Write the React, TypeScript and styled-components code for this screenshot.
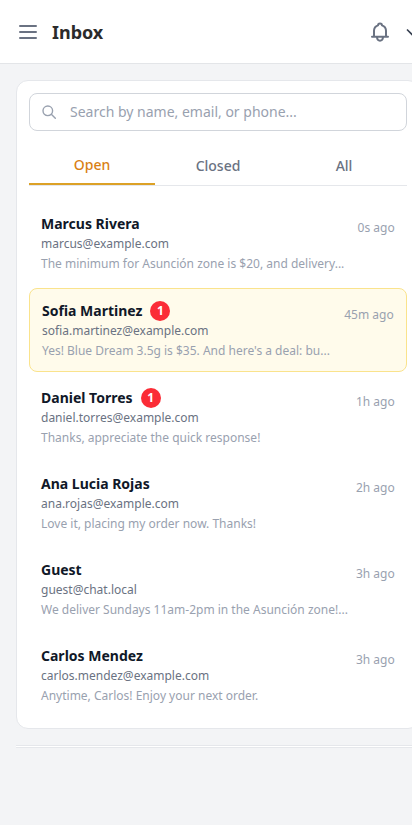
import React from "react";
import styled, { createGlobalStyle } from "styled-components";

const GlobalStyle = createGlobalStyle`
  *, *::before, *::after { box-sizing: border-box; }
  body {
    margin: 0;
    overflow: hidden;
    background: #f3f4f6;
    font-family: "Noto Sans", sans-serif;
  }
  button { font: inherit; border: 0; padding: 0; background: none; }
`;

const Page = styled.div`
  height: 825px;
  overflow: hidden;
  background: #f3f4f6;
`;

const Header = styled.header`
  display: flex;
  align-items: center;
  height: 64px;
  width: 422px;
  padding-left: 16px;
  background: #fff;
  border-bottom: 1px solid #e3e5e8;
`;

const IconButton = styled.button`
  display: flex;
  flex: none;
  color: #6a7282;
`;

const Title = styled.h1`
  flex: 1;
  margin: 1px 0 0 12px;
  font-size: 18px;
  line-height: 28px;
  font-weight: 700;
  letter-spacing: -0.03px;
  color: #2b2b2b;
`;

const AccountButton = styled(IconButton)`
  width: 20px;
  margin-left: 11px;
  color: #374151;
`;

const Card = styled.main`
  width: 404px;
  margin: 16px 0 0 16px;
  padding: 12px;
  background: #fff;
  border: 1px solid #e5e7eb;
  border-radius: 12px;
`;

const Search = styled.label`
  display: flex;
  align-items: center;
  height: 38px;
  padding: 0 12px;
  gap: 13px;
  border: 1px solid #d1d5db;
  border-radius: 8px;
  color: #99a1af;
`;

const SearchInput = styled.input`
  flex: 1;
  min-width: 0;
  padding: 0;
  border: 0;
  outline: 0;
  background: none;
  font: 14px/20px "Noto Sans", sans-serif;
  &::placeholder { color: #99a1af; opacity: 1; }
`;

const Tabs = styled.nav`
  display: grid;
  grid-template-columns: repeat(3, 1fr);
  height: 43px;
  margin: 12px 0 16px;
  border-bottom: 1px solid #e5e7eb;
`;

const Tab = styled.button<{ $active?: boolean }>`
  height: 42px;
  padding-top: 4px;
  font-size: 14px;
  line-height: 20px;
  font-weight: 500;
  color: ${(p) => (p.$active ? "#d97f14" : "#6a7282")};
  border-bottom: ${(p) => (p.$active ? "2px solid #dca126" : "0")};
`;

const List = styled.div`
  display: flex;
  flex-direction: column;
  gap: 4px;
`;

const Row = styled.article<{ $selected?: boolean }>`
  display: flex;
  justify-content: space-between;
  padding: 12px;
  border-radius: 8px;
  background: ${(p) => (p.$selected ? "#fffbeb" : "transparent")};
  border: ${(p) => (p.$selected ? "1px solid #fae38c" : "0")};
`;

const Name = styled.h2`
  display: flex;
  align-items: center;
  gap: 8px;
  margin: 0;
  height: 20px;
  font-size: 14px;
  line-height: 20px;
  font-weight: 700;
  color: #101828;
`;

const Badge = styled.span`
  width: 20px;
  height: 20px;
  border-radius: 50%;
  background: #fb2c36;
  color: #fff;
  font-size: 12px;
  line-height: 20px;
  font-weight: 700;
  text-align: center;
`;

const Email = styled.p`
  margin: 2px 0 4px;
  font-size: 12px;
  line-height: 16px;
  color: #6a7282;
`;

const Preview = styled.p`
  margin: 0;
  font-size: 12px;
  line-height: 16px;
  color: #99a1af;
  white-space: nowrap;
`;

const Time = styled.time`
  margin: 6px 0.3px 0 0;
  font-size: 12px;
  line-height: 16px;
  color: #99a1af;
  white-space: nowrap;
`;

const NextPanel = styled.section`
  width: 404px;
  height: 3px;
  margin: 16px 0 0 16px;
  background: #fff;
  border: solid #e5e7eb;
  border-width: 1px 0;
`;

const conversations = [
  { name: "Marcus Rivera", email: "marcus@example.com", text: "The minimum for Asunción zone is $20, and delivery...", time: "0s ago" },
  { name: "Sofia Martinez", email: "sofia.martinez@example.com", text: "Yes! Blue Dream 3.5g is $35. And here's a deal: bu...", time: "45m ago", unread: 1, selected: true },
  { name: "Daniel Torres", email: "daniel.torres@example.com", text: "Thanks, appreciate the quick response!", time: "1h ago", unread: 1 },
  { name: "Ana Lucia Rojas", email: "ana.rojas@example.com", text: "Love it, placing my order now. Thanks!", time: "2h ago" },
  { name: "Guest", email: "guest@chat.local", text: "We deliver Sundays 11am-2pm in the Asunción zone!...", time: "3h ago" },
  { name: "Carlos Mendez", email: "carlos.mendez@example.com", text: "Anytime, Carlos! Enjoy your next order.", time: "3h ago" },
];

export default function App() {
  return (
    <Page>
      <GlobalStyle />
      <Header>
        <IconButton aria-label="Menu">
          <svg width="24" height="24" viewBox="0 0 24 24" fill="none" stroke="currentColor" strokeWidth="2" strokeLinecap="round">
            <path d="M4 6h16M4 12h16M4 18h16" />
          </svg>
        </IconButton>
        <Title>Inbox</Title>
        <IconButton aria-label="Notifications">
          <svg width="22" height="24" viewBox="0 0 22 24" fill="none" stroke="currentColor" strokeWidth="2" strokeLinecap="round" strokeLinejoin="round">
            <path d="M3 16.800h16M5 16.500v-5.700c0-2.700 1.500-4.600 4-5.400 0-1.200.8-1.900 2-1.900s2 .7 2 1.900c2.500.8 4 2.700 4 5.400v5.700M8 17.500c.2 2.100 1.300 3.200 3 3.200s2.800-1.100 3-3.200" />
          </svg>
        </IconButton>
        <AccountButton aria-label="Account">
          <svg width="20" height="20" viewBox="0 0 20 20" fill="none" stroke="currentColor" strokeWidth="1.6">
            <path d="m5 7.500 5 5 5-5" />
          </svg>
        </AccountButton>
      </Header>
      <Card>
        <Search>
          <svg width="15" height="15" viewBox="0 0 15 15" fill="none" stroke="currentColor" strokeWidth="1.4" strokeLinecap="round">
            <circle cx="5.800" cy="5.800" r="4.800" />
            <path d="m9.300 9.300 4 4" />
          </svg>
          <SearchInput placeholder="Search by name, email, or phone..." />
        </Search>
        <Tabs>
          <Tab $active>Open</Tab>
          <Tab>Closed</Tab>
          <Tab>All</Tab>
        </Tabs>
        <List>
          {conversations.map((c) => (
            <Row key={c.name} $selected={c.selected}>
              <div>
                <Name>
                  {c.name}
                  {c.unread && <Badge>{c.unread}</Badge>}
                </Name>
                <Email>{c.email}</Email>
                <Preview>{c.text}</Preview>
              </div>
              <Time>{c.time}</Time>
            </Row>
          ))}
        </List>
      </Card>
      <NextPanel />
    </Page>
  );
}
